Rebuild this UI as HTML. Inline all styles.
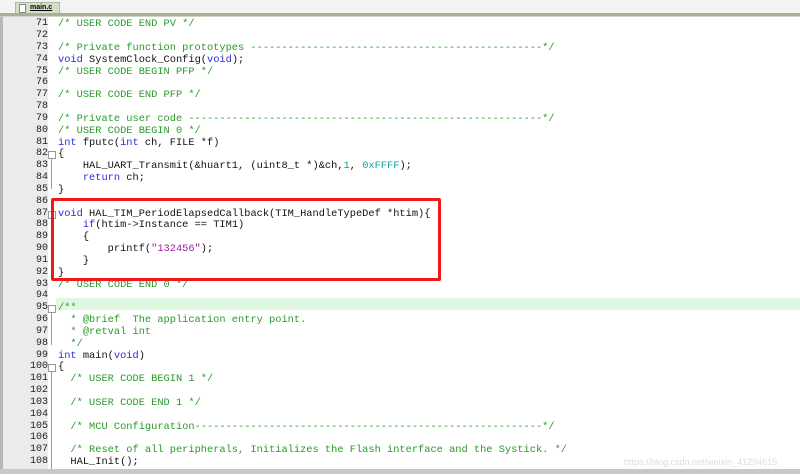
<!DOCTYPE html>
<html><head><meta charset="utf-8"><style>
body{margin:0;width:800px;height:474px;overflow:hidden;background:#fff;position:relative;font-family:"Liberation Mono",monospace;}
.top{position:absolute;left:0;top:0;width:800px;height:13px;background:#f3f3f3;}
.bar{position:absolute;left:0;top:13px;width:800px;height:3px;background:#a8b098;border-bottom:1px solid #d0d4c8;}
.tab{position:absolute;left:15px;top:2px;width:43px;height:11px;background:#d6dfc6;border:1px solid #b0b8a0;border-bottom:none;font:bold 7px "Liberation Sans",sans-serif;}
.tab span{position:absolute;left:14px;top:1px;text-decoration:underline;}
.tab i{position:absolute;left:3px;top:1px;width:5px;height:7px;border:1px solid #888;background:#fff;}
.lb{position:absolute;left:0;top:16px;width:3px;height:458px;background:#b8b8b8;}
.gut{position:absolute;left:3px;top:17px;width:45px;height:452px;background:#ebebeb;}
.hl{position:absolute;left:56px;width:744px;height:12px;background:#e0f8e0;}
.w{position:absolute;left:0;top:2px;width:800px;height:474px;}
.l{position:absolute;left:0;width:800px;height:12px;font-size:10.35px;line-height:12px;white-space:pre;}
.n{position:absolute;right:752px;color:#222;font-size:10px;}
.c{position:absolute;left:58px;color:#111;}
.cm{color:#2a9a2a}.k{color:#2a2ae0}.s{color:#a020a0}.d{color:#10a0a0}
.fold{position:absolute;left:48px;width:6px;height:6px;border:1px solid #999;background:#fff;}
.vl{position:absolute;left:51px;width:1px;background:#999;}
.box{position:absolute;left:51px;top:198px;width:384px;height:77px;border:3px solid #f01818;border-radius:2px;}
.sb{position:absolute;left:0;top:469px;width:800px;height:5px;background:#c8c8c8;}
.wm{position:absolute;left:624px;top:457px;color:#ddd;font:9px "Liberation Sans",sans-serif;}
</style></head><body>
<div class="top"></div><div class="tab"><i></i><span>main.c</span></div>
<div class="lb"></div><div class="gut"></div>
<div class="hl" style="top:298px"></div>
<div class="w">
<div class="l" style="top:16px"><span class="n">71</span><span class="c"><span class="cm">/* USER CODE END PV */</span></span></div>
<div class="l" style="top:28px"><span class="n">72</span></div>
<div class="l" style="top:40px"><span class="n">73</span><span class="c"><span class="cm">/* Private function prototypes -----------------------------------------------*/</span></span></div>
<div class="l" style="top:52px"><span class="n">74</span><span class="c"><span class="k">void</span> SystemClock_Config(<span class="k">void</span>);</span></div>
<div class="l" style="top:64px"><span class="n">75</span><span class="c"><span class="cm">/* USER CODE BEGIN PFP */</span></span></div>
<div class="l" style="top:75px"><span class="n">76</span></div>
<div class="l" style="top:87px"><span class="n">77</span><span class="c"><span class="cm">/* USER CODE END PFP */</span></span></div>
<div class="l" style="top:99px"><span class="n">78</span></div>
<div class="l" style="top:111px"><span class="n">79</span><span class="c"><span class="cm">/* Private user code ---------------------------------------------------------*/</span></span></div>
<div class="l" style="top:123px"><span class="n">80</span><span class="c"><span class="cm">/* USER CODE BEGIN 0 */</span></span></div>
<div class="l" style="top:135px"><span class="n">81</span><span class="c"><span class="k">int</span> fputc(<span class="k">int</span> ch, FILE *f)</span></div>
<div class="l" style="top:146px"><span class="n">82</span><span class="c">{</span></div>
<div class="l" style="top:158px"><span class="n">83</span><span class="c">    HAL_UART_Transmit(&amp;huart1, (uint8_t *)&amp;ch,<span class="d">1</span>, <span class="d">0xFFFF</span>);</span></div>
<div class="l" style="top:170px"><span class="n">84</span><span class="c">    <span class="k">return</span> ch;</span></div>
<div class="l" style="top:182px"><span class="n">85</span><span class="c">}</span></div>
<div class="l" style="top:194px"><span class="n">86</span></div>
<div class="l" style="top:206px"><span class="n">87</span><span class="c"><span class="k">void</span> HAL_TIM_PeriodElapsedCallback(TIM_HandleTypeDef *htim){</span></div>
<div class="l" style="top:217px"><span class="n">88</span><span class="c">    <span class="k">if</span>(htim-&gt;Instance == TIM1)</span></div>
<div class="l" style="top:229px"><span class="n">89</span><span class="c">    {</span></div>
<div class="l" style="top:241px"><span class="n">90</span><span class="c">        printf(<span class="s">"132456"</span>);</span></div>
<div class="l" style="top:253px"><span class="n">91</span><span class="c">    }</span></div>
<div class="l" style="top:265px"><span class="n">92</span><span class="c">}</span></div>
<div class="l" style="top:277px"><span class="n">93</span><span class="c"><span class="cm">/* USER CODE END 0 */</span></span></div>
<div class="l" style="top:288px"><span class="n">94</span></div>
<div class="l" style="top:300px"><span class="n">95</span><span class="c"><span class="cm">/**</span></span></div>
<div class="l" style="top:312px"><span class="n">96</span><span class="c"><span class="cm">  * @brief  The application entry point.</span></span></div>
<div class="l" style="top:324px"><span class="n">97</span><span class="c"><span class="cm">  * @retval int</span></span></div>
<div class="l" style="top:336px"><span class="n">98</span><span class="c"><span class="cm">  */</span></span></div>
<div class="l" style="top:348px"><span class="n">99</span><span class="c"><span class="k">int</span> main(<span class="k">void</span>)</span></div>
<div class="l" style="top:359px"><span class="n">100</span><span class="c">{</span></div>
<div class="l" style="top:371px"><span class="n">101</span><span class="c">  <span class="cm">/* USER CODE BEGIN 1 */</span></span></div>
<div class="l" style="top:383px"><span class="n">102</span></div>
<div class="l" style="top:395px"><span class="n">103</span><span class="c">  <span class="cm">/* USER CODE END 1 */</span></span></div>
<div class="l" style="top:407px"><span class="n">104</span></div>
<div class="l" style="top:419px"><span class="n">105</span><span class="c">  <span class="cm">/* MCU Configuration--------------------------------------------------------*/</span></span></div>
<div class="l" style="top:430px"><span class="n">106</span></div>
<div class="l" style="top:442px"><span class="n">107</span><span class="c">  <span class="cm">/* Reset of all peripherals, Initializes the Flash interface and the Systick. */</span></span></div>
<div class="l" style="top:454px"><span class="n">108</span><span class="c">  HAL_Init();</span></div>
<div class="fold" style="top:149px"></div><div class="vl" style="top:157px;height:30px"></div>
<div class="fold" style="top:209px"></div><div class="vl" style="top:217px;height:54px"></div>
<div class="fold" style="top:303px"></div><div class="vl" style="top:311px;height:32px"></div>
<div class="fold" style="top:362px"></div><div class="vl" style="top:370px;height:100px"></div>
</div>
<div class="bar"></div>
<div class="box"></div>
<div class="wm">https://blog.csdn.net/weixin_41294615</div>
<div class="sb"></div>
</body></html>
